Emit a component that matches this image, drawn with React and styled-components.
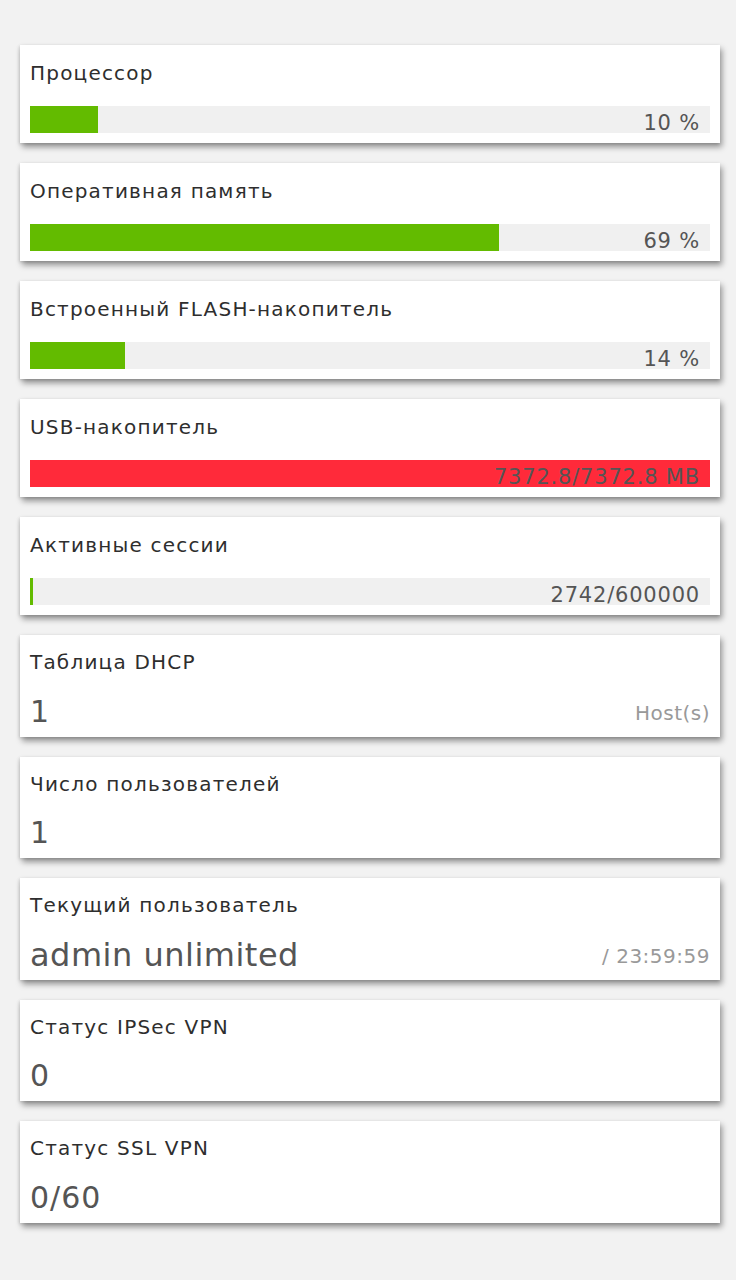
import React from "react";
import styled, { createGlobalStyle } from "styled-components";

const Global = createGlobalStyle`
  html, body { margin: 0; padding: 0; background: #f2f2f2; }
  body { font-family: "DejaVu Sans", "Liberation Sans", sans-serif; }
  * { box-sizing: border-box; }
`;

const Page = styled.div`
  display: flex;
  flex-direction: column;
  gap: 20px;
  padding: 45px 16px 57px 20px;
  min-height: 1280px;
  background: #f2f2f2;
`;

const Card = styled.section`
  background: #fff;
  height: ${(p) => (p.$tall ? 101.5 : 98)}px;
  padding: 0 10px 10px;
  box-shadow: 2px 4px 6px rgba(0, 0, 0, 0.4), -1px 1px 3px rgba(0, 0, 0, 0.12);
  display: flex;
  flex-direction: column;
`;

const Title = styled.div`
  height: 61px;
  padding-top: 16px;
  font-size: 20px;
  line-height: 24px;
  color: #2e2e2e;
  letter-spacing: 1.2px;
  white-space: nowrap;
`;

const ValueTitle = styled(Title)`
  height: 46px;
  padding-top: 15px;
`;

const Bar = styled.div`
  position: relative;
  height: 27px;
  background: #f0f0f0;
  overflow: hidden;
`;

const Fill = styled.div`
  height: 100%;
  background: ${(p) => p.$color};
`;

const BarLabel = styled.span`
  position: absolute;
  right: 10px;
  bottom: 0;
  font-size: 21px;
  line-height: 19px;
  color: #555;
  letter-spacing: 0.8px;
  white-space: nowrap;
`;

const ValueRow = styled.div`
  flex: 1;
  display: flex;
  align-items: flex-end;
  justify-content: space-between;
`;

const Value = styled.span`
  font-size: ${(p) => (p.$big ? 32 : 30)}px;
  line-height: 30px;
  color: #555;
  letter-spacing: ${(p) => (p.$big ? 0.5 : 1)}px;
`;

const Side = styled.span`
  font-size: 20px;
  line-height: 28px;
  color: #999;
  letter-spacing: 0.5px;
`;

const GREEN = "#63bb00";
const RED = "#ff2a3a";

const bars = [
  { title: "Процессор", pct: 10, label: "10 %", color: GREEN },
  { title: "Оперативная память", pct: 69, label: "69 %", color: GREEN },
  { title: "Встроенный FLASH-накопитель", pct: 14, label: "14 %", color: GREEN },
  { title: "USB-накопитель", pct: 100, label: "7372.8/7372.8 MB", color: RED },
  { title: "Активные сессии", pct: 0.46, label: "2742/600000", color: GREEN, min: 3 },
];

const values = [
  { title: "Таблица DHCP", value: "1", side: "Host(s)" },
  { title: "Число пользователей", value: "1" },
  { title: "Текущий пользователь", value: "admin unlimited", side: "/ 23:59:59", big: true },
  { title: "Статус IPSec VPN", value: "0" },
  { title: "Статус SSL VPN", value: "0/60" },
];

export default function App() {
  return (
    <>
      <Global />
      <Page>
        {bars.map((b) => (
          <Card key={b.title}>
            <Title>{b.title}</Title>
            <Bar>
              <Fill
                $color={b.color}
                style={{ width: b.min ? `${b.min}px` : `${b.pct}%` }}
              />
              <BarLabel>{b.label}</BarLabel>
            </Bar>
          </Card>
        ))}
        {values.map((v) => (
          <Card key={v.title} $tall>
            <ValueTitle>{v.title}</ValueTitle>
            <ValueRow>
              <Value $big={v.big}>{v.value}</Value>
              {v.side && <Side>{v.side}</Side>}
            </ValueRow>
          </Card>
        ))}
      </Page>
    </>
  );
}
